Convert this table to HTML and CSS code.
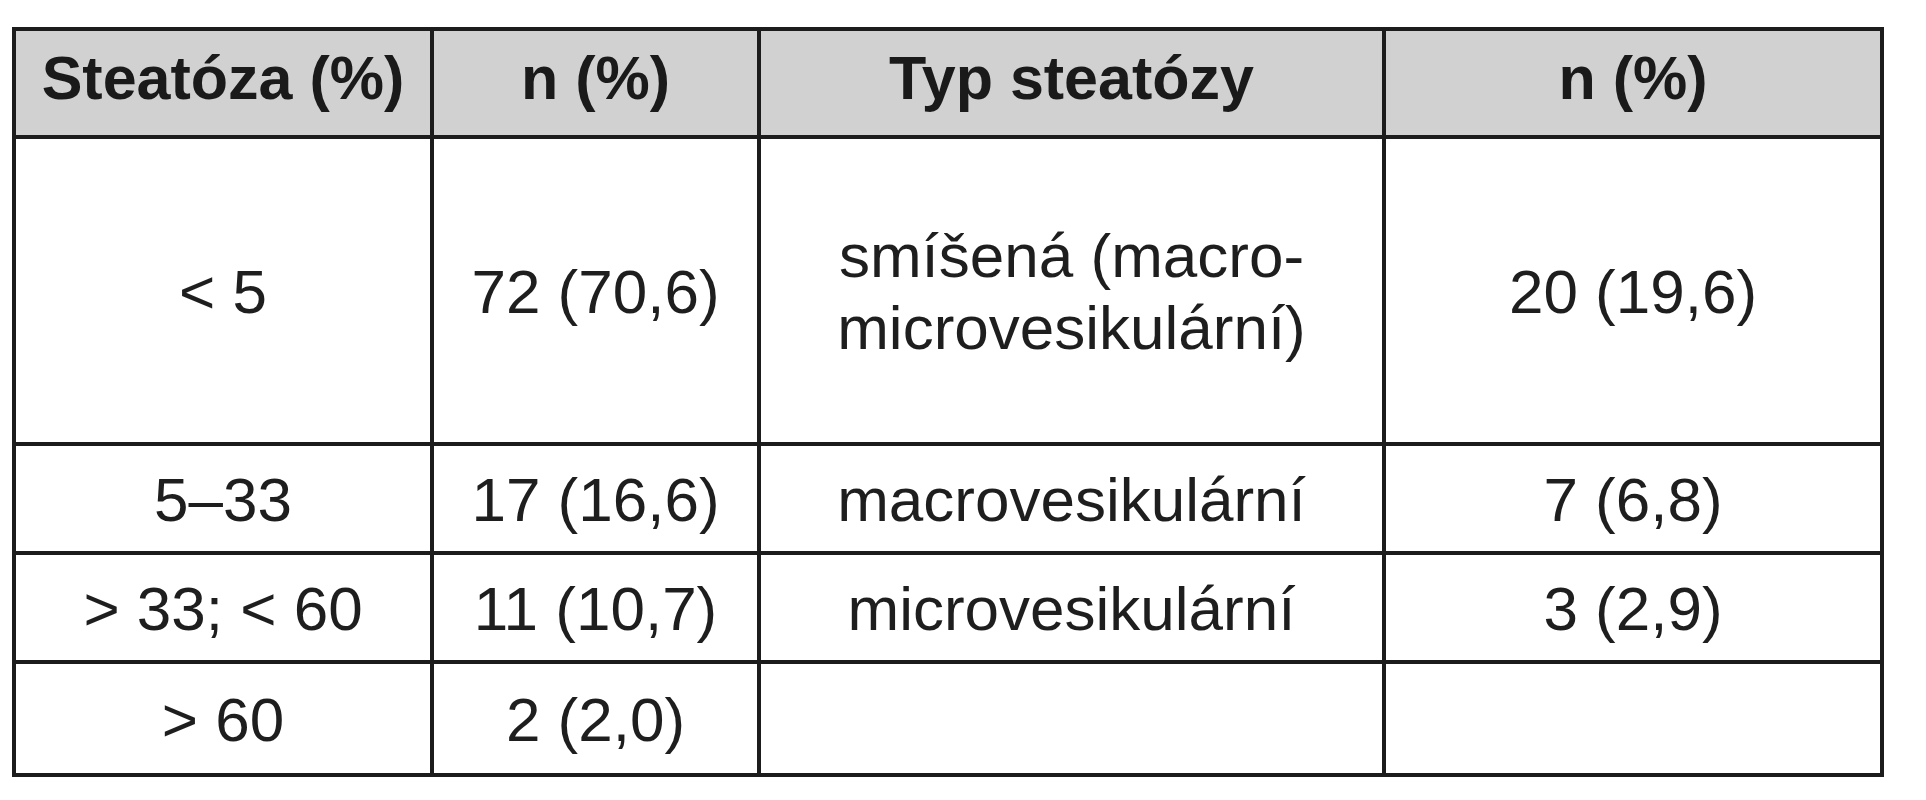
FILE: index.html
```html
<!DOCTYPE html>
<html lang="cs">
<head>
<meta charset="utf-8">
<title>Steatóza</title>
<link rel="stylesheet" href="styles.css">
</head>
<body>
<div class="page">
  <table class="data">
    <colgroup>
      <col class="c1"><col class="c2"><col class="c3"><col class="c4">
    </colgroup>
    <thead>
      <tr class="head">
        <th>Steatóza (%)</th>
        <th>n (%)</th>
        <th>Typ steatózy</th>
        <th>n (%)</th>
      </tr>
    </thead>
    <tbody>
      <tr class="tall">
        <td>&lt; 5</td>
        <td>72 (70,6)</td>
        <td>smíšená (macro-<br>microvesikulární)</td>
        <td>20 (19,6)</td>
      </tr>
      <tr class="row">
        <td>5–33</td>
        <td>17 (16,6)</td>
        <td>macrovesikulární</td>
        <td>7 (6,8)</td>
      </tr>
      <tr class="row">
        <td>&gt; 33; &lt; 60</td>
        <td>11 (10,7)</td>
        <td>microvesikulární</td>
        <td>3 (2,9)</td>
      </tr>
      <tr class="row last">
        <td>&gt; 60</td>
        <td>2 (2,0)</td>
        <td></td>
        <td></td>
      </tr>
    </tbody>
  </table>
</div>
</body>
</html>
```

FILE: styles.css
```css
html, body {
  margin: 0;
  padding: 0;
  background: #ffffff;
}

.page {
  padding: 27px 0 0 12px;
}

.data {
  border-collapse: collapse;
  table-layout: fixed;
  width: 1868px;
  font-family: "Liberation Sans", Arial, sans-serif;
  color: #1e1e1e;
}

.c1 { width: 418px; }
.c2 { width: 327px; }
.c3 { width: 625px; }
.c4 { width: 498px; }

.data th,
.data td {
  border: 4px solid #1c1c1c;
  text-align: center;
  vertical-align: middle;
  padding: 2px 0 0 0;
  font-size: 62px;
  line-height: 72px;
}

.data th {
  background: #d1d1d1;
  font-weight: bold;
  font-size: 61px;
  color: #1a1a1a;
  padding: 0 0 10px 0;
}

.head { height: 108px; }
.tall { height: 307px; }
.row { height: 109px; }
.last { height: 113px; }
```
